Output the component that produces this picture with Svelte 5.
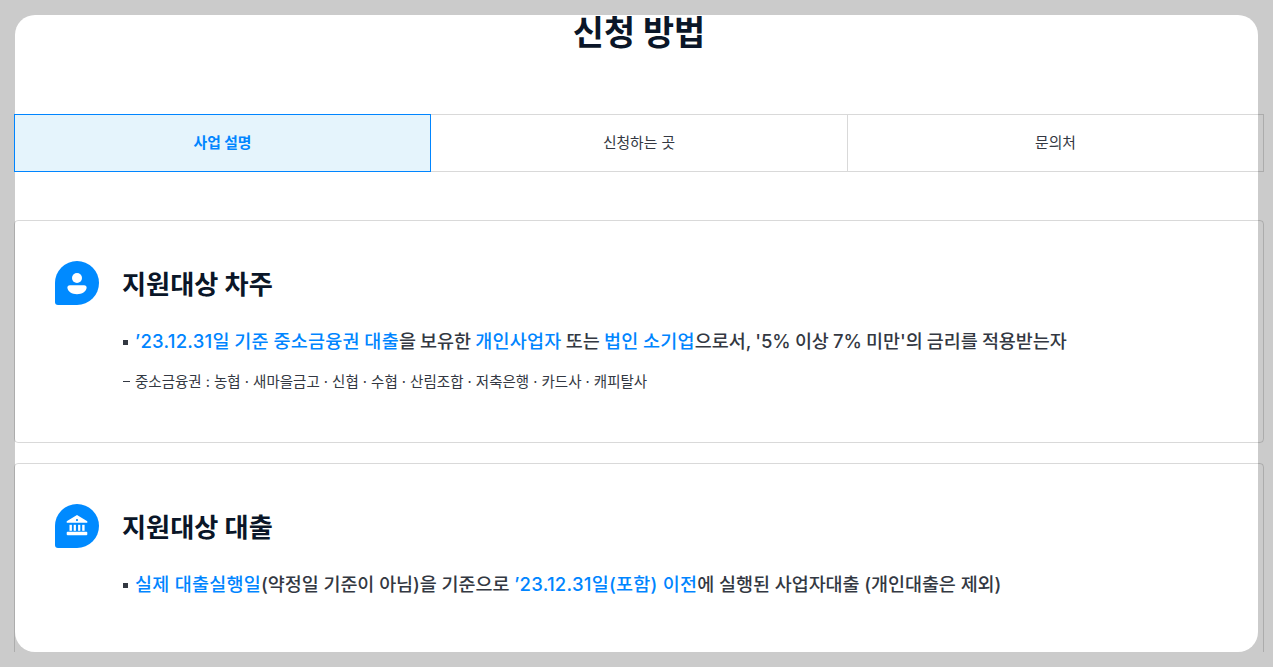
<script>
  const tabs = ["사업 설명", "신청하는 곳", "문의처"];
  let active = $state(0);
</script>

<div class="modal">
  <div class="content">
    <h1 class="title">신청 방법</h1>

    <div class="tabs">
      {#each tabs as tab, i}
        <button class="tab" class:active={active === i} onclick={() => (active = i)}>{tab}</button>
      {/each}
    </div>

    <section class="card">
      <div class="card-head">
        <span class="badge">
          <svg viewBox="0 0 44 44" width="44" height="44" fill="#fff">
            <circle cx="22" cy="17" r="5" />
            <path d="M15 24.300h14c1.700 0 2.900 1.300 2.600 2.800-.6 3.600-4.400 6.200-9.600 6.200s-9-2.600-9.600-6.200c-.3-1.500.9-2.800 2.600-2.800z" />
          </svg>
        </span>
        <h2>지원대상 차주</h2>
      </div>
      <p class="main tight"><em>’23.12.31일 기준 중소금융권 대출</em>을 보유한 <em>개인사업자</em> 또는 <em>법인 소기업</em>으로서, '5% 이상 7% 미만'의 금리를 적용받는자</p>
      <p class="sub">중소금융권 : 농협 · 새마을금고 · 신협 · 수협 · 산림조합 · 저축은행 · 카드사 · 캐피탈사</p>
    </section>

    <section class="card second">
      <div class="card-head">
        <span class="badge">
          <svg viewBox="0 0 44 44" width="44" height="44" fill="#fff">
            <path fill-rule="evenodd" d="M22 11 32.300 17.300v1.400H11.700v-1.400zM22 15a1.100 1.100 0 1 0 0 2.200 1.100 1.100 0 0 0 0-2.200z" />
            <rect x="14.500" y="20.800" width="2.400" height="6" />
            <rect x="18.700" y="20.800" width="2.200" height="6" />
            <rect x="23.100" y="20.800" width="2.200" height="6" />
            <rect x="27.200" y="20.800" width="2.400" height="6" />
            <rect x="11.700" y="27.700" width="20.600" height="3.600" rx="1" />
          </svg>
        </span>
        <h2>지원대상 대출</h2>
      </div>
      <p class="main"><em>실제 대출실행일</em>(약정일 기준이 아님)을 기준으로 <em>’23.12.31일(포함) 이전</em>에 실행된 사업자대출 (개인대출은 제외)</p>
    </section>
  </div>
</div>

<style>
  :global(body) {
    background: #cbcbcb;
    font-family: Inter, "Noto Sans CJK KR", sans-serif;
    color: #333842;
  }

  .modal {
    width: 1243px;
    height: 637px;
    margin: 15px 0 0 15px;
    background: #fff;
    border-radius: 20px;
  }

  .content {
    width: 1250px;
    margin-left: -1px;
  }

  .title {
    margin: 0;
    box-sizing: border-box;
    height: 99px;
    padding-top: 1px;
    font-size: 33.800px;
    line-height: 34px;
    font-weight: 700;
    text-align: center;
    color: #0a1628;
  }

  .tabs {
    display: grid;
    grid-template-columns: 417px 417px 416px;
    height: 58px;
  }

  .tab {
    border: 1px solid rgba(0, 0, 0, 0.15);
    border-left-width: 0;
    background: transparent;
    padding: 0 0 4px;
    font: inherit;
    font-size: 14.800px;
    color: #333842;
  }

  .tab.active {
    border: 1px solid #0085ff;
    background: #e5f4fc;
    color: #0085ff;
    font-weight: 700;
  }

  .card {
    height: 223px;
    margin-top: 48px;
    padding: 40px 40px 0;
    box-sizing: border-box;
    border: 1px solid rgba(0, 0, 0, 0.15);
    border-radius: 4px;
  }

  .card.second {
    height: 193px;
    margin-top: 20px;
  }

  .card-head {
    display: flex;
    align-items: flex-start;
    gap: 23px;
  }

  .badge {
    display: flex;
    width: 44px;
    height: 44px;
    background: #008aff;
    border-radius: 50% 50% 50% 3px;
  }

  h2 {
    margin: 0;
    padding-top: 2px;
    font-size: 26.200px;
    line-height: 44px;
    font-weight: 700;
    color: #0a1628;
  }

  .main {
    position: relative;
    margin: 19px 0 0 67px;
    padding-left: 13px;
    font-size: 18.500px;
    line-height: 30px;
    font-weight: 500;
    letter-spacing: -0.08px;
    color: #333842;
  }

  .main.tight {
    word-spacing: -0.6px;
  }

  .main::before {
    content: "";
    position: absolute;
    left: 1px;
    top: 14px;
    width: 5px;
    height: 5px;
    background: #333842;
  }

  em {
    font-style: normal;
    font-weight: 500;
    letter-spacing: 0.25px;
    color: #0085ff;
  }

  .sub {
    position: relative;
    margin: 16px 0 0 67px;
    padding-left: 13px;
    font-size: 14.500px;
    line-height: 20px;
    color: #333842;
  }

  .sub::before {
    content: "";
    position: absolute;
    left: 1px;
    top: 9px;
    width: 7px;
    height: 1px;
    background: #333842;
  }
</style>
